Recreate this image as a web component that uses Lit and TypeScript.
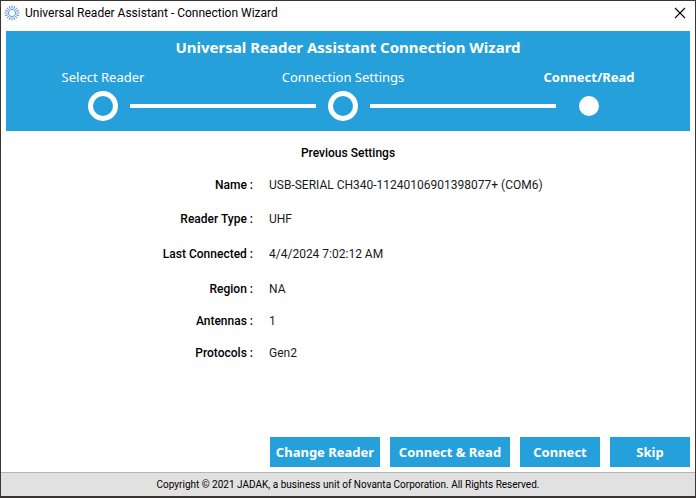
import { LitElement, html, css, svg } from "lit";
import { customElement } from "lit/decorators.js";

interface Setting {
  label: string;
  value: string;
}

const SETTINGS: Setting[] = [
  { label: "Name :", value: "USB-SERIAL CH340-11240106901398077+ (COM6)" },
  { label: "Reader Type :", value: "UHF" },
  { label: "Last Connected :", value: "4/4/2024 7:02:12 AM" },
  { label: "Region :", value: "NA" },
  { label: "Antennas :", value: "1" },
  { label: "Protocols :", value: "Gen2" },
];

const RAYS = Array.from({ length: 16 }, (_, i) => i * 22.5);

@customElement("app-root")
export class AppRoot extends LitElement {
  static styles = css`
    :host {
      display: flex;
      flex-direction: column;
      box-sizing: border-box;
      min-height: 100vh;
      border: 1px solid #3a3535;
      border-bottom-width: 2px;
      background: #fff;
      color: #000;
      font: 12px/16px Roboto, "Noto Sans", sans-serif;
      white-space: nowrap;
    }
    .titlebar {
      display: flex;
      align-items: center;
      height: 24px;
      padding: 0 9px 0 3px;
      margin-bottom: 6px;
    }
    .logo {
      width: 16px;
      height: 16px;
      margin-right: 5px;
    }
    .caption {
      flex: 1;
    }
    .close {
      display: flex;
      padding: 0;
      border: 0;
      background: none;
    }
    .wizard {
      margin: 0 5px;
      height: 100px;
      background: #26a0da;
      color: #fff;
      font-family: "Noto Sans", "Open Sans", sans-serif;
    }
    .heading {
      margin: 0;
      padding-top: 5px;
      font-size: 15px;
      line-height: 22px;
      font-weight: 700;
      text-align: center;
    }
    .steps {
      display: grid;
      grid-template-columns: 54px 1fr 54px 1fr 66px;
      grid-template-rows: 20px 30px;
      row-gap: 4px;
      margin: 9px 68px 0 70px;
      padding: 0;
      list-style: none;
      align-items: center;
      justify-items: center;
    }
    .step {
      display: contents;
    }
    .name {
      grid-row: 1;
      font-size: 13px;
      line-height: 20px;
    }
    .dot {
      grid-row: 2;
      box-sizing: border-box;
      width: 30px;
      height: 30px;
      border: 5px solid #fff;
      border-radius: 50%;
    }
    .current .name {
      font-weight: 700;
    }
    .current .dot {
      width: 20px;
      height: 20px;
      background: #fff;
    }
    .c1 { grid-column: 1; }
    .c2 { grid-column: 2; }
    .c3 { grid-column: 3; }
    .c4 { grid-column: 4; }
    .c5 { grid-column: 5; }
    .line {
      grid-row: 2;
      justify-self: stretch;
      height: 4px;
      background: #fff;
    }
    .content {
      flex: 1;
    }
    .subheading {
      margin: 14px 0 7px;
      font-size: 12px;
      line-height: 16px;
      font-weight: 500;
      text-align: center;
    }
    .settings {
      display: grid;
      grid-template-columns: 252px 1fr;
      grid-template-rows: 34px 34px 36px 34px 30px 34px;
      column-gap: 16px;
      align-items: center;
      margin: 0;
    }
    .settings dt {
      text-align: right;
      font-weight: 500;
    }
    .settings dd {
      margin: 0;
      color: #1a1a1a;
    }
    .actions {
      display: flex;
      justify-content: flex-end;
      gap: 10px;
      padding: 0 5px 5px;
    }
    .action {
      height: 30px;
      min-width: 80px;
      padding: 0;
      border: 0;
      background: #26a0da;
      color: #fff;
      font: 700 13px/18px "Noto Sans", "Open Sans", sans-serif;
    }
    .wide { width: 110px; }
    .wider { width: 120px; }
    .footer {
      border-top: 1px solid #b5b5b5;
      background: #e1e1e1;
      font-size: 10px;
      line-height: 23px;
      text-align: center;
    }
  `;

  render() {
    return html`
      <header class="titlebar">
        <svg class="logo" viewBox="0 0 16 16" aria-hidden="true">
          <circle cx="8" cy="8" r="3.6" fill="none" stroke="#5b9bd5" stroke-width="1" />
          ${RAYS.map(
            (a) => svg`<path d="M8 0.6V3.4" stroke="#5b8fc9" stroke-width="1" transform="rotate(${a} 8 8)" />`
          )}
        </svg>
        <span class="caption">Universal Reader Assistant - Connection Wizard</span>
        <button class="close" aria-label="Close">
          <svg width="12" height="12" viewBox="0 0 12 12">
            <path d="M1 1L11 11M11 1L1 11" stroke="#000" stroke-width="1.1" />
          </svg>
        </button>
      </header>
      <section class="wizard">
        <h1 class="heading">Universal Reader Assistant Connection Wizard</h1>
        <ol class="steps">
          <li class="step"><span class="name c1">Select Reader</span><span class="dot c1"></span><span class="line c2"></span></li>
          <li class="step"><span class="name c3">Connection Settings</span><span class="dot c3"></span><span class="line c4"></span></li>
          <li class="step current" aria-current="step"><span class="name c5">Connect/Read</span><span class="dot c5"></span></li>
        </ol>
      </section>
      <main class="content">
        <h2 class="subheading">Previous Settings</h2>
        <dl class="settings">
          ${SETTINGS.map((s) => html`<dt>${s.label}</dt><dd>${s.value}</dd>`)}
        </dl>
      </main>
      <div class="actions">
        <button class="action wide">Change Reader</button>
        <button class="action wider">Connect &amp; Read</button>
        <button class="action">Connect</button>
        <button class="action">Skip</button>
      </div>
      <footer class="footer">Copyright © 2021 JADAK, a business unit of Novanta Corporation. All Rights Reserved.</footer>
    `;
  }
}
